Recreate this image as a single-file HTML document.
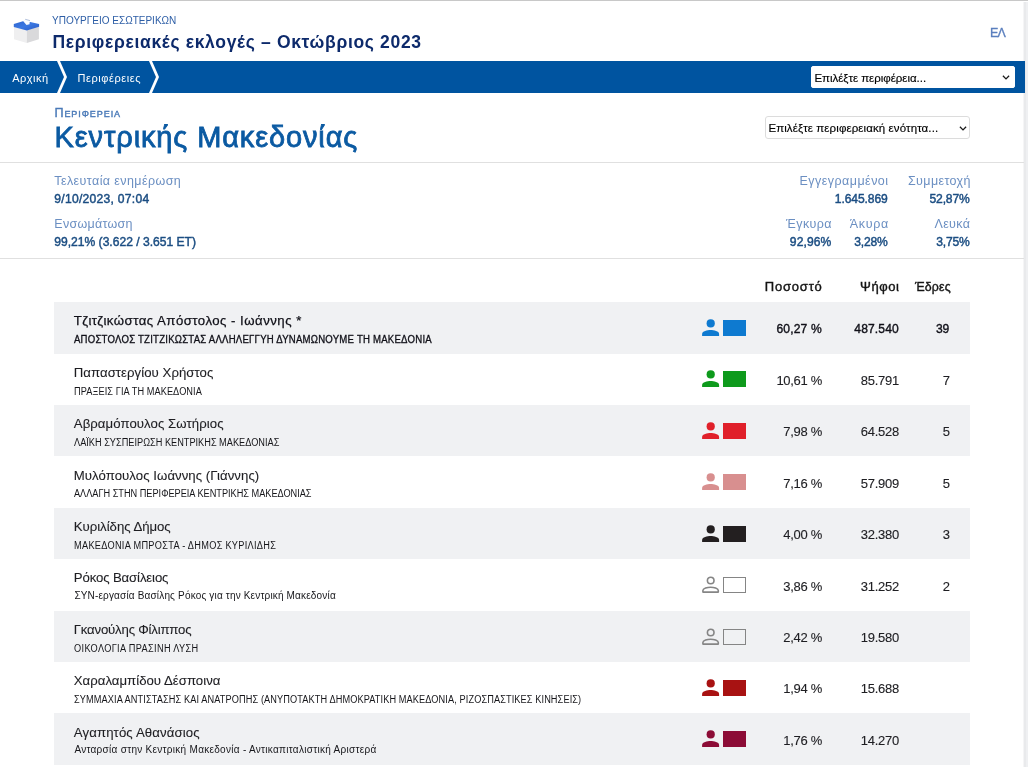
<!DOCTYPE html>
<html lang="el">
<head>
<meta charset="utf-8">
<title>Περιφερειακές εκλογές – Οκτώβριος 2023</title>
<style>
*{box-sizing:border-box;margin:0;padding:0}
html,body{width:1028px;height:767px;overflow:hidden;background:#fff}
body{font-family:"Liberation Sans",sans-serif;color:#222;position:relative}
.t{position:absolute;white-space:nowrap;line-height:1}
header,nav,section{will-change:transform}
.frame-top{position:absolute;left:0;top:0;width:1028px;height:1px;background:#c8c8c8}
.frame-right{position:absolute;left:1023px;top:2px;width:5px;height:765px;background:linear-gradient(to right,#f5f5f6 0,#f5f5f6 1px,#e9eaec 1px,#e9eaec 3px,#eff0f2 3px,#eff0f2 5px)}
header{position:absolute;left:0;top:0;width:1024px;height:61px}
.logo{position:absolute;left:8px;top:12px;width:40px;height:38px}
.ministry{color:#2d5ea6}
.title{color:#0d2a6b}
.lang{color:#5b7fbe}
nav{position:absolute;left:0;top:61px;width:1025px;height:32px;background:#0054a0}
nav .crumb{color:#fff}
nav svg.sep{position:absolute;left:0;top:0;width:170px;height:32px}
.sel{position:absolute;background:#fff;border:1px solid #dcdcdc;border-radius:3px;color:#000}
.sel svg{position:absolute}
.head{position:absolute;left:0;top:93px;width:1024px;height:70px;border-bottom:1px solid #e0e0e0}
.kicker{color:#4a7ab8;font-variant:small-caps}
h1{font-weight:normal;color:#0b5aa2}
.info{position:absolute;left:0;top:163px;width:1024px;height:96px;border-bottom:1px solid #e0e0e0}
.info .l{color:#6b8fc2}
.info .v{color:#1b4d82}
.results{position:absolute;left:0;top:259px;width:1024px;height:508px}
.thead span{color:#141414}
.row{position:absolute;left:54px;width:916px}
.row.odd{background:#f0f1f3}
.row .n{color:#1e1e22}
.row .p{color:#16161a}
.row .c{color:#1e1e22}
.row.b .n,.row.b .p,.row.b .c{color:#101018}
.row .ic{position:absolute;width:19px;height:17px}
.row .sw{position:absolute;width:23px;height:16px}
</style>
</head>
<body>
<div class="frame-top"></div>
<div class="frame-right"></div>
<header>
<svg class="logo" viewBox="8 12 40 38">
<defs><linearGradient id="lid" x1="0" y1="0" x2="1" y2="1"><stop offset="0" stop-color="#2f66cf"/><stop offset="0.5" stop-color="#3b78e2"/><stop offset="1" stop-color="#2a5bc4"/></linearGradient></defs>
<polygon points="14,26.500 26.800,30 26.800,43.100 14,39.300" fill="#efeff0"/>
<polygon points="26.800,30 38.900,26.500 38.900,39.300 26.800,43.100" fill="#d9d9db"/>
<polygon points="13.800,23.900 24.600,20.800 39.100,23.900 39.100,26.700 26.800,30.500 13.800,27" fill="url(#lid)"/>
<polygon points="23.200,21.300 25.300,19.400 29.900,20.600 29.500,24.300 26.500,25" fill="#fbfdff"/>
<polyline points="25.200,19.300 30,20.600" fill="none" stroke="#8ea2cc" stroke-width="0.7"/>
</svg>
<div id="ministry" class="t ministry" style="font-size:11.8px;letter-spacing:-0.011px;top:15px;left:52.4px;transform:scaleX(0.85);transform-origin:left center;">ΥΠΟΥΡΓΕΙΟ ΕΣΩΤΕΡΙΚΩΝ</div>
<div id="title" class="t title" style="font-size:17.5px;letter-spacing:0.671px;top:33.5px;left:52.5px;font-weight:bold;">Περιφερειακές εκλογές – Οκτώβριος 2023</div>
<div id="lang" class="t lang" style="font-size:12.5px;letter-spacing:-0.834px;top:27px;left:990.1px;-webkit-text-stroke:0.3px currentColor;">ΕΛ</div>
</header>
<nav>
<span id="crumb1" class="t crumb" style="font-size:11px;letter-spacing:0.5px;top:12px;left:12.2px;">Αρχική</span>
<span id="crumb2" class="t crumb" style="font-size:11px;letter-spacing:0.563px;top:12px;left:77.5px;">Περιφέρειες</span>
<svg class="sep" viewBox="0 0 170 32"><polygon points="57,0 60,0 67,16 60,32 57,32 64,16" fill="#fff"/><polygon points="149,0 152,0 159,16 152,32 149,32 156,16" fill="#fff"/></svg>
<div class="sel" style="left:811px;top:5px;width:204px;height:22px;border-color:#ffffff;border-radius:2px"><span id="sel1t" class="t" style="font-size:11.5px;letter-spacing:-0.027px;top:6.2px;left:2.4px;-webkit-text-stroke:0.15px currentColor;">Επιλέξτε περιφέρεια...</span><svg style="left:190px;top:8px;width:8px;height:5px" viewBox="0 0 8 5"><polyline points="0.900,0.700 4,3.900 7.100,0.700" fill="none" stroke="#1a1a1a" stroke-width="1.25"/></svg></div>
</nav>
<section class="head">
<div id="kicker" class="t kicker" style="font-size:12.6px;letter-spacing:0.934px;top:14px;left:54.4px;-webkit-text-stroke:0.4px currentColor;">Περιφερεια</div>
<h1 id="h1" class="t" style="font-size:29px;letter-spacing:0.871px;top:30.2px;left:54.6px;-webkit-text-stroke:0.8px currentColor;">Κεντρικής Μακεδονίας</h1>
<div class="sel" style="left:765px;top:23px;width:205px;height:23px"><span id="sel2t" class="t" style="font-size:11.5px;letter-spacing:0.1px;top:6px;left:2.4px;-webkit-text-stroke:0.15px currentColor;">Επιλέξτε περιφερειακή ενότητα...</span><svg style="left:192.5px;top:8.5px;width:8px;height:5px" viewBox="0 0 8 5"><polyline points="0.900,0.700 4,3.900 7.100,0.700" fill="none" stroke="#1a1a1a" stroke-width="1.25"/></svg></div>
</section>
<section class="info">
<div id="il1" class="t l" style="font-size:12.5px;letter-spacing:0.41px;top:12.3px;left:54.3px;">Τελευταία ενημέρωση</div>
<div id="iv1" class="t v" style="font-size:12.1px;letter-spacing:0.271px;top:30.2px;left:54.3px;-webkit-text-stroke:0.45px currentColor;">9/10/2023, 07:04</div>
<div id="il2" class="t l" style="font-size:12.5px;letter-spacing:0.267px;top:55.3px;left:54.3px;">Ενσωμάτωση</div>
<div id="iv2" class="t v" style="font-size:12.1px;letter-spacing:-0.008px;top:73.2px;left:54.3px;-webkit-text-stroke:0.45px currentColor;">99,21% (3.622 / 3.651 ΕΤ)</div>
<div id="il3" class="t l" style="font-size:12.5px;letter-spacing:0.459px;top:12.3px;right:135.5px;">Εγγεγραμμένοι</div>
<div id="iv3" class="t v" style="font-size:12.1px;letter-spacing:-0.105px;top:30.2px;right:136.3px;-webkit-text-stroke:0.45px currentColor;">1.645.869</div>
<div id="il4" class="t l" style="font-size:12.5px;letter-spacing:0.387px;top:12.3px;right:53.1px;">Συμμετοχή</div>
<div id="iv4" class="t v" style="font-size:12.1px;letter-spacing:-0.15px;top:30.2px;right:54.4px;-webkit-text-stroke:0.45px currentColor;">52,87%</div>
<div id="il5" class="t l" style="font-size:12.5px;letter-spacing:0.423px;top:55.3px;right:192.0px;">Έγκυρα</div>
<div id="iv5" class="t v" style="font-size:12.1px;letter-spacing:0.075px;top:73.2px;right:192.7px;-webkit-text-stroke:0.45px currentColor;">92,96%</div>
<div id="il6" class="t l" style="font-size:12.5px;letter-spacing:0.636px;top:55.3px;right:135.2px;">Άκυρα</div>
<div id="iv6" class="t v" style="font-size:12.1px;letter-spacing:-0.168px;top:73.2px;right:136.4px;-webkit-text-stroke:0.45px currentColor;">3,28%</div>
<div id="il7" class="t l" style="font-size:12.5px;letter-spacing:0.405px;top:55.3px;right:53.5px;">Λευκά</div>
<div id="iv7" class="t v" style="font-size:12.1px;letter-spacing:-0.177px;top:73.2px;right:54.4px;-webkit-text-stroke:0.45px currentColor;">3,75%</div>
</section>
<section class="results">
<div class="thead">
<span id="th1" class="t" style="font-size:13px;letter-spacing:0.796px;top:21px;right:201.4px;-webkit-text-stroke:0.4px currentColor;">Ποσοστό</span>
<span id="th2" class="t" style="font-size:13px;letter-spacing:0.609px;top:21px;right:124.4px;-webkit-text-stroke:0.4px currentColor;">Ψήφοι</span>
<span id="th3" class="t" style="font-size:13px;letter-spacing:0.208px;top:21px;right:73.4px;-webkit-text-stroke:0.4px currentColor;transform:scaleX(0.95);transform-origin:right center;">Έδρες</span>
</div>
<div class="row odd b" style="top:43px;height:52px">
<div id="r0n" class="t n" style="font-size:13.2px;letter-spacing:0.486px;top:12px;left:19.8px;-webkit-text-stroke:0.25px currentColor;">Τζιτζικώστας Απόστολος - Ιωάννης *</div>
<div id="r0p" class="t p" style="font-size:10.0px;letter-spacing:0.229px;top:33px;left:20.4px;-webkit-text-stroke:0.3px currentColor;transform:scaleX(0.96);transform-origin:left center;">ΑΠΟΣΤΟΛΟΣ ΤΖΙΤΖΙΚΩΣΤΑΣ ΑΛΛΗΛΕΓΓΥΗ ΔΥΝΑΜΩΝΟΥΜΕ ΤΗ ΜΑΚΕΔΟΝΙΑ</div>
<svg class="ic" style="left:647px;top:17px" viewBox="0 0 19 17"><circle cx="9.7" cy="4.4" r="4.1" fill="#0e7ad0"/><path d="M1.1 16.900v-2c0-2.600 5.300-3.800 8.500-3.800s8.500 1.200 8.500 3.800v2z" fill="#0e7ad0"/></svg>
<div class="sw" style="left:669px;top:18px;background:#0e7ad0"></div>
<div id="r0c1" class="t c" style="font-size:13px;letter-spacing:0.176px;top:20px;right:147.8px;-webkit-text-stroke:0.4px currentColor;transform:scaleX(0.93);transform-origin:right center;">60,27 %</div>
<div id="r0c2" class="t c" style="font-size:13px;letter-spacing:0.115px;top:20px;right:71.3px;-webkit-text-stroke:0.4px currentColor;transform:scaleX(0.93);transform-origin:right center;">487.540</div>
<div id="r0c3" class="t c" style="font-size:13px;letter-spacing:-0.3px;top:20px;right:20.9px;-webkit-text-stroke:0.4px currentColor;transform:scaleX(0.93);transform-origin:right center;">39</div>
</div>
<div class="row" style="top:95px;height:51px">
<div id="r1n" class="t n" style="font-size:13.2px;letter-spacing:0.047px;top:12px;left:19.8px;-webkit-text-stroke:0.1px currentColor;">Παπαστεργίου Χρήστος</div>
<div id="r1p" class="t p" style="font-size:10.0px;letter-spacing:0.081px;top:33px;left:20.4px;transform:scaleX(0.92);transform-origin:left center;">ΠΡΑΞΕΙΣ ΓΙΑ ΤΗ ΜΑΚΕΔΟΝΙΑ</div>
<svg class="ic" style="left:647px;top:16px" viewBox="0 0 19 17"><circle cx="9.7" cy="4.4" r="4.1" fill="#0e9a1c"/><path d="M1.1 16.900v-2c0-2.600 5.300-3.800 8.500-3.800s8.500 1.200 8.500 3.800v2z" fill="#0e9a1c"/></svg>
<div class="sw" style="left:669px;top:17px;background:#0e9a1c"></div>
<div id="r1c1" class="t c" style="font-size:13px;letter-spacing:-0.3px;top:20px;right:148px;-webkit-text-stroke:0.12px currentColor;">10,61 %</div>
<div id="r1c2" class="t c" style="font-size:13px;letter-spacing:-0.3px;top:20px;right:71.2px;-webkit-text-stroke:0.12px currentColor;">85.791</div>
<div id="r1c3" class="t c" style="font-size:13px;letter-spacing:-0.3px;top:20px;right:20.3px;-webkit-text-stroke:0.12px currentColor;">7</div>
</div>
<div class="row odd" style="top:146px;height:51px">
<div id="r2n" class="t n" style="font-size:13.2px;letter-spacing:0.065px;top:12px;left:19.8px;-webkit-text-stroke:0.1px currentColor;">Αβραμόπουλος Σωτήριος</div>
<div id="r2p" class="t p" style="font-size:10.0px;letter-spacing:-0.002px;top:33px;left:20.4px;transform:scaleX(0.92);transform-origin:left center;">ΛΑΪΚΗ ΣΥΣΠΕΙΡΩΣΗ ΚΕΝΤΡΙΚΗΣ ΜΑΚΕΔΟΝΙΑΣ</div>
<svg class="ic" style="left:647px;top:17px" viewBox="0 0 19 17"><circle cx="9.7" cy="4.4" r="4.1" fill="#e0202a"/><path d="M1.1 16.900v-2c0-2.600 5.300-3.800 8.500-3.800s8.500 1.200 8.500 3.800v2z" fill="#e0202a"/></svg>
<div class="sw" style="left:669px;top:18px;background:#e0202a"></div>
<div id="r2c1" class="t c" style="font-size:13px;letter-spacing:-0.3px;top:20px;right:148px;-webkit-text-stroke:0.12px currentColor;">7,98 %</div>
<div id="r2c2" class="t c" style="font-size:13px;letter-spacing:-0.3px;top:20px;right:71.2px;-webkit-text-stroke:0.12px currentColor;">64.528</div>
<div id="r2c3" class="t c" style="font-size:13px;letter-spacing:-0.3px;top:20px;right:20.3px;-webkit-text-stroke:0.12px currentColor;">5</div>
</div>
<div class="row" style="top:197px;height:52px">
<div id="r3n" class="t n" style="font-size:13.2px;letter-spacing:0.052px;top:13px;left:19.8px;-webkit-text-stroke:0.1px currentColor;">Μυλόπουλος Ιωάννης (Γιάννης)</div>
<div id="r3p" class="t p" style="font-size:10.0px;letter-spacing:-0.022px;top:33px;left:20.4px;transform:scaleX(0.92);transform-origin:left center;">ΑΛΛΑΓΗ ΣΤΗΝ ΠΕΡΙΦΕΡΕΙΑ ΚΕΝΤΡΙΚΗΣ ΜΑΚΕΔΟΝΙΑΣ</div>
<svg class="ic" style="left:647px;top:17px" viewBox="0 0 19 17"><circle cx="9.7" cy="4.4" r="4.1" fill="#d88f8f"/><path d="M1.1 16.900v-2c0-2.600 5.300-3.800 8.500-3.800s8.500 1.200 8.500 3.800v2z" fill="#d88f8f"/></svg>
<div class="sw" style="left:669px;top:18px;background:#d88f8f"></div>
<div id="r3c1" class="t c" style="font-size:13px;letter-spacing:-0.3px;top:21px;right:148px;-webkit-text-stroke:0.12px currentColor;">7,16 %</div>
<div id="r3c2" class="t c" style="font-size:13px;letter-spacing:-0.3px;top:21px;right:71.2px;-webkit-text-stroke:0.12px currentColor;">57.909</div>
<div id="r3c3" class="t c" style="font-size:13px;letter-spacing:-0.3px;top:21px;right:20.3px;-webkit-text-stroke:0.12px currentColor;">5</div>
</div>
<div class="row odd" style="top:249px;height:51px">
<div id="r4n" class="t n" style="font-size:13.2px;letter-spacing:-0.031px;top:12px;left:19.8px;-webkit-text-stroke:0.1px currentColor;">Κυριλίδης Δήμος</div>
<div id="r4p" class="t p" style="font-size:10.0px;letter-spacing:0.314px;top:33px;left:20.4px;transform:scaleX(0.92);transform-origin:left center;">ΜΑΚΕΔΟΝΙΑ ΜΠΡΟΣΤΑ - ΔΗΜΟΣ ΚΥΡΙΛΙΔΗΣ</div>
<svg class="ic" style="left:647px;top:17px" viewBox="0 0 19 17"><circle cx="9.7" cy="4.4" r="4.1" fill="#231f20"/><path d="M1.1 16.900v-2c0-2.600 5.300-3.800 8.500-3.800s8.500 1.200 8.500 3.800v2z" fill="#231f20"/></svg>
<div class="sw" style="left:669px;top:18px;background:#231f20"></div>
<div id="r4c1" class="t c" style="font-size:13px;letter-spacing:-0.3px;top:20px;right:148px;-webkit-text-stroke:0.12px currentColor;">4,00 %</div>
<div id="r4c2" class="t c" style="font-size:13px;letter-spacing:-0.3px;top:20px;right:71.2px;-webkit-text-stroke:0.12px currentColor;">32.380</div>
<div id="r4c3" class="t c" style="font-size:13px;letter-spacing:-0.3px;top:20px;right:20.3px;-webkit-text-stroke:0.12px currentColor;">3</div>
</div>
<div class="row" style="top:300px;height:52px">
<div id="r5n" class="t n" style="font-size:13.2px;letter-spacing:-0.132px;top:12px;left:19.8px;-webkit-text-stroke:0.1px currentColor;">Ρόκος Βασίλειος</div>
<div id="r5p" class="t p" style="font-size:10px;letter-spacing:0.169px;top:32px;left:20.4px;">ΣΥΝ-εργασία Βασίλης Ρόκος για την Κεντρική Μακεδονία</div>
<svg class="ic" style="left:647px;top:17px" viewBox="0 0 19 17"><circle cx="9.7" cy="4.5" r="3.3" fill="none" stroke="#858585" stroke-width="1.600"/><path d="M1.900 16.100v-1.600c0-2.100 4.600-3.300 7.700-3.300s7.700 1.200 7.700 3.300v1.600z" fill="none" stroke="#858585" stroke-width="1.600" stroke-linejoin="round"/></svg>
<div class="sw" style="left:669px;top:18px;background:#ffffff;border:1px solid #858585"></div>
<div id="r5c1" class="t c" style="font-size:13px;letter-spacing:-0.3px;top:21px;right:148px;-webkit-text-stroke:0.12px currentColor;">3,86 %</div>
<div id="r5c2" class="t c" style="font-size:13px;letter-spacing:-0.3px;top:21px;right:71.2px;-webkit-text-stroke:0.12px currentColor;">31.252</div>
<div id="r5c3" class="t c" style="font-size:13px;letter-spacing:-0.3px;top:21px;right:20.3px;-webkit-text-stroke:0.12px currentColor;">2</div>
</div>
<div class="row odd" style="top:352px;height:51px">
<div id="r6n" class="t n" style="font-size:13.2px;letter-spacing:-0.194px;top:12px;left:19.8px;-webkit-text-stroke:0.1px currentColor;">Γκανούλης Φίλιππος</div>
<div id="r6p" class="t p" style="font-size:10.0px;letter-spacing:0.363px;top:33px;left:20.4px;transform:scaleX(0.92);transform-origin:left center;">ΟΙΚΟΛΟΓΙΑ ΠΡΑΣΙΝΗ ΛΥΣΗ</div>
<svg class="ic" style="left:647px;top:17px" viewBox="0 0 19 17"><circle cx="9.7" cy="4.5" r="3.3" fill="none" stroke="#858585" stroke-width="1.600"/><path d="M1.900 16.100v-1.600c0-2.100 4.600-3.300 7.700-3.300s7.700 1.200 7.700 3.300v1.600z" fill="none" stroke="#858585" stroke-width="1.600" stroke-linejoin="round"/></svg>
<div class="sw" style="left:669px;top:18px;background:#f0f1f3;border:1px solid #858585"></div>
<div id="r6c1" class="t c" style="font-size:13px;letter-spacing:-0.3px;top:20px;right:148px;-webkit-text-stroke:0.12px currentColor;">2,42 %</div>
<div id="r6c2" class="t c" style="font-size:13px;letter-spacing:-0.3px;top:20px;right:71.2px;-webkit-text-stroke:0.12px currentColor;">19.580</div>
</div>
<div class="row" style="top:403px;height:51px">
<div id="r7n" class="t n" style="font-size:13.2px;letter-spacing:0.017px;top:12px;left:19.8px;-webkit-text-stroke:0.1px currentColor;">Χαραλαμπίδου Δέσποινα</div>
<div id="r7p" class="t p" style="font-size:10.0px;letter-spacing:0.109px;top:33px;left:20.4px;transform:scaleX(0.92);transform-origin:left center;">ΣΥΜΜΑΧΙΑ ΑΝΤΙΣΤΑΣΗΣ ΚΑΙ ΑΝΑΤΡΟΠΗΣ (ΑΝΥΠΟΤΑΚΤΗ ΔΗΜΟΚΡΑΤΙΚΗ ΜΑΚΕΔΟΝΙΑ, ΡΙΖΟΣΠΑΣΤΙΚΕΣ ΚΙΝΗΣΕΙΣ)</div>
<svg class="ic" style="left:647px;top:17px" viewBox="0 0 19 17"><circle cx="9.7" cy="4.4" r="4.1" fill="#a81212"/><path d="M1.1 16.900v-2c0-2.600 5.300-3.800 8.500-3.800s8.500 1.200 8.500 3.800v2z" fill="#a81212"/></svg>
<div class="sw" style="left:669px;top:18px;background:#a81212"></div>
<div id="r7c1" class="t c" style="font-size:13px;letter-spacing:-0.3px;top:20px;right:148px;-webkit-text-stroke:0.12px currentColor;">1,94 %</div>
<div id="r7c2" class="t c" style="font-size:13px;letter-spacing:-0.3px;top:20px;right:71.2px;-webkit-text-stroke:0.12px currentColor;">15.688</div>
</div>
<div class="row odd" style="top:454px;height:52px">
<div id="r8n" class="t n" style="font-size:13.2px;letter-spacing:0.118px;top:13px;left:19.8px;-webkit-text-stroke:0.1px currentColor;">Αγαπητός Αθανάσιος</div>
<div id="r8p" class="t p" style="font-size:10px;letter-spacing:0.288px;top:32px;left:20.4px;">Ανταρσία στην Κεντρική Μακεδονία - Αντικαπιταλιστική Αριστερά</div>
<svg class="ic" style="left:647px;top:17px" viewBox="0 0 19 17"><circle cx="9.7" cy="4.4" r="4.1" fill="#8c0c36"/><path d="M1.1 16.900v-2c0-2.600 5.300-3.800 8.500-3.800s8.500 1.200 8.500 3.800v2z" fill="#8c0c36"/></svg>
<div class="sw" style="left:669px;top:18px;background:#8c0c36"></div>
<div id="r8c1" class="t c" style="font-size:13px;letter-spacing:-0.3px;top:21px;right:148px;-webkit-text-stroke:0.12px currentColor;">1,76 %</div>
<div id="r8c2" class="t c" style="font-size:13px;letter-spacing:-0.3px;top:21px;right:71.2px;-webkit-text-stroke:0.12px currentColor;">14.270</div>
</div>
</section>
</body>
</html>
